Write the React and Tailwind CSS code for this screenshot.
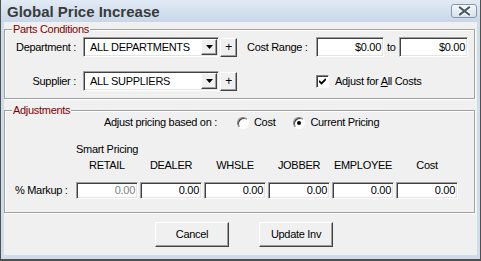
const sunken =
  "border border-t-[#a0a0a0] border-l-[#a0a0a0] border-b-white border-r-white shadow-[inset_1px_1px_0_#404040,inset_-1px_-1px_0_#e3e3e3] bg-white";
const raised =
  "border border-t-white border-l-white border-b-[#404040] border-r-[#404040] shadow-[inset_-1px_-1px_0_#a0a0a0] bg-[#f0f0f0]";

function Arrow() {
  return (
    <svg width="7" height="4" viewBox="0 0 7 4">
      <path d="M0 0h7L3.5 4z" fill="#000" />
    </svg>
  );
}

function Combo({ value }) {
  return (
    <div className={`${sunken} w-[136px] h-[20px] flex items-stretch p-[1px]`}>
      <div className="flex-1 flex items-center pl-[5px]">{value}</div>
      <div className={`${raised} w-[16px] flex items-center justify-center`}>
        <Arrow />
      </div>
    </div>
  );
}

function Plus() {
  return (
    <div
      className={`${raised} ml-[1px] w-[17px] h-[19px] flex items-center justify-center text-[12px] leading-none`}
    >
      +
    </div>
  );
}

function Field({ value, w, h = "h-[20px]", gray }) {
  return (
    <div
      className={`${sunken} ${w} ${h} flex items-center justify-end pr-[2px] ${
        gray ? "text-[#808080]" : ""
      }`}
    >
      {value}
    </div>
  );
}

function Group({ title, className, children }) {
  return (
    <div
      className={`relative border border-[#a0a0a0] shadow-[inset_1px_1px_0_#fff,1px_1px_0_#fff] ${className}`}
    >
      <span className="absolute -top-[8px] left-[7px] px-[1px] bg-[#f0f0f0] text-[#800000] leading-[14px]">
        {title}
      </span>
      {children}
    </div>
  );
}

function Radio({ checked, label }) {
  return (
    <div className="flex items-center">
      <div className="w-[12px] h-[12px] rounded-full border border-t-[#808080] border-l-[#808080] border-b-white border-r-white shadow-[inset_1px_1px_0_#404040] bg-white flex items-center justify-center">
        {checked && <div className="w-[4px] h-[4px] rounded-full bg-black" />}
      </div>
      <span className="ml-[5px]">{label}</span>
    </div>
  );
}

const cols = ["RETAIL", "DEALER", "WHSLE", "JOBBER", "EMPLOYEE", "Cost"];

export default function App() {
  return (
    <div
      className="w-[481px] h-[261px] bg-[#cfdcea] border-x border-b-2 border-[#505050] text-[11px] tracking-[-0.3px] text-black"
      style={{ fontFamily: '"Liberation Sans", Arial, sans-serif' }}
    >
      <div className="h-[22px] flex items-center justify-between pl-[6px] pr-[3px] bg-gradient-to-b from-[#e2ebf5] to-[#c8d7e8]">
        <span className="text-[15px] font-bold text-[#3a3a3a] leading-none tracking-normal">
          Global Price Increase
        </span>
        <div className="w-[26px] h-[14px] rounded-[3px] border border-[#8795a6] bg-gradient-to-b from-[#f4f7fb] to-[#d6e0eb] flex items-center justify-center">
          <svg width="13" height="10" viewBox="0 0 13 10">
            <path
              d="M2 1.5l9 7M11 1.5l-9 7"
              stroke="#fff"
              strokeWidth="4"
              strokeLinecap="square"
            />
            <path
              d="M2 1.5l9 7M11 1.5l-9 7"
              stroke="#4c5868"
              strokeWidth="2.2"
              strokeLinecap="square"
            />
          </svg>
        </div>
      </div>

      <div className="mx-[3px] h-[233px] bg-[#f0f0f0] pr-[2px] pt-[7px]">
        <Group title="Parts Conditions" className="h-[70px] pt-[7px]">
          <div className="flex items-center h-[20px]">
            <div className="w-[71px] text-right">Department :</div>
            <div className="ml-[7px]">
              <Combo value="ALL DEPARTMENTS" />
            </div>
            <Plus />
            <div className="ml-[10px] w-[69px]">Cost Range :</div>
            <Field value="$0.00" w="w-[68px]" />
            <div className="ml-[3px] w-[12px]">to</div>
            <Field value="$0.00" w="w-[69px]" />
          </div>
          <div className="flex items-center h-[20px] mt-[14px]">
            <div className="w-[71px] text-right">Supplier :</div>
            <div className="ml-[7px]">
              <Combo value="ALL SUPPLIERS" />
            </div>
            <Plus />
            <div className="ml-[79px] flex items-center">
              <div className="w-[13px] h-[13px] border border-t-[#808080] border-l-[#808080] border-b-white border-r-white shadow-[inset_1px_1px_0_#404040] bg-white flex items-center justify-center">
                <svg width="7" height="7" viewBox="0 0 7 7">
                  <path d="M0 3l2.5 2.5L7 1" stroke="#000" strokeWidth="1.8" fill="none" />
                </svg>
              </div>
              <span className="ml-[6px]">
                Adjust for <span className="underline">A</span>ll Costs
              </span>
            </div>
          </div>
        </Group>

        <Group title="Adjustments" className="mt-[11px] h-[103px] pt-[5px]">
          <div className="flex items-center h-[13px] pl-[99px]">
            <span>Adjust pricing based on :</span>
            <div className="ml-[20px]">
              <Radio label="Cost" />
            </div>
            <div className="ml-[18px]">
              <Radio checked label="Current Pricing" />
            </div>
          </div>
          <div className="flex items-end mt-[12px] pl-[71px] gap-[2px] leading-[16px]">
            {cols.map((c, i) => (
              <div key={c} className="w-[62px] text-center whitespace-nowrap">
                {i === 0 && <div>Smart Pricing</div>}
                <div>{c}</div>
              </div>
            ))}
          </div>
          <div className="flex items-center mt-[9px]">
            <div className="w-[71px] pl-[10px]">% Markup :</div>
            <div className="flex gap-[2px]">
              {cols.map((c, i) => (
                <Field key={c} value="0.00" w="w-[62px]" h="h-[17px]" gray={i === 0} />
              ))}
            </div>
          </div>
        </Group>

        <div className="mt-[9px] flex pl-[151px] gap-[30px]">
          <button className={`${raised} w-[74px] h-[25px]`}>Cancel</button>
          <button className={`${raised} w-[74px] h-[25px]`}>Update Inv</button>
        </div>
      </div>
    </div>
  );
}
